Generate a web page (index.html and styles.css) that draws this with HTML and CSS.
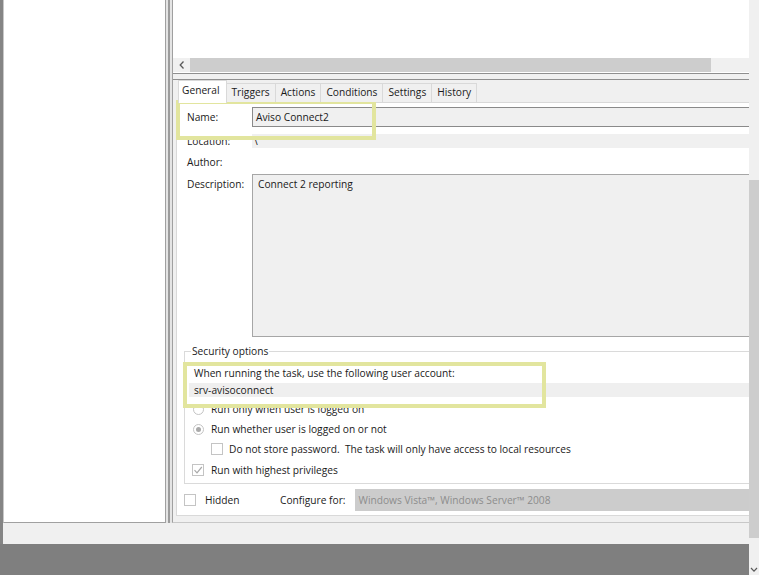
FILE: index.html
```html
<!DOCTYPE html>
<html lang="en">
<head>
    <meta charset="UTF-8">
    <meta name="viewport" content="width=device-width, initial-scale=1.0">
    <title>Task Properties - Aviso Connect2</title>
    <link rel="stylesheet" href="styles.css">
</head>
<body>
<div class="screen">
    <div class="main">
        <div class="frame">
            <div class="workspace">
                <div class="left-pane"></div>
                <div class="splitter"></div>
                <div class="right-pane">
                    <div class="task-list"></div>
                    <div class="hscroll">
                        <div class="scroll-btn">
                            <svg width="6" height="8" viewBox="0 0 6 8"><path d="M4.5 0.5 L1.2 4 L4.5 7.5" fill="none" stroke="#5a5a5a" stroke-width="1.3"/></svg>
                        </div>
                        <div class="hthumb"></div>
                        <div class="htrack"></div>
                    </div>
                    <div class="divider"></div>
                    <div class="tabs">
                        <div class="tab-strip">
                            <div class="tab active">General</div>
                            <div class="tab">Triggers</div>
                            <div class="tab">Actions</div>
                            <div class="tab">Conditions</div>
                            <div class="tab">Settings</div>
                            <div class="tab">History</div>
                        </div>
                        <div class="tab-page">
                            <div class="row row-name">
                                <span class="label">Name:</span>
                                <div class="field edit">Aviso Connect2</div>
                            </div>
                            <div class="row row-small">
                                <span class="label">Location:</span>
                                <div class="field flat">\</div>
                            </div>
                            <div class="row row-small">
                                <span class="label">Author:</span>
                            </div>
                            <div class="row row-desc">
                                <span class="label">Description:</span>
                                <div class="field memo">Connect 2 reporting</div>
                            </div>

                            <fieldset class="security">
                                <legend>Security options</legend>
                                <div class="account-label">When running the task, use the following user account:</div>
                                <div class="account-name">srv-avisoconnect</div>
                                <div class="option radio-row first">
                                    <span class="radio"></span>Run only when user is logged on
                                </div>
                                <div class="option radio-row">
                                    <span class="radio checked"></span>Run whether user is logged on or not
                                </div>
                                <div class="option sub-row">
                                    <span class="check"></span>Do not store password.&nbsp; The task will only have access to local resources
                                </div>
                                <div class="option priv-row">
                                    <span class="check">
                                        <svg width="10" height="10" viewBox="0 0 10 10"><path d="M1.5 5.2 L4 7.8 L8.8 2" fill="none" stroke="#a8a8a8" stroke-width="1.2"/></svg>
                                    </span>Run with highest privileges
                                </div>
                            </fieldset>

                            <div class="bottom-row">
                                <div class="hidden-opt"><span class="check"></span>Hidden</div>
                                <span class="configure-label">Configure for:</span>
                                <div class="combo">Windows Vista&trade;, Windows Server&trade; 2008</div>
                            </div>
                        </div>
                    </div>
                </div>
            </div>
            <div class="statusbar"></div>
        </div>
        <div class="desktop"></div>
    </div>
    <div class="vscroll">
        <div class="vtrack top"></div>
        <div class="vthumb"></div>
        <div class="vtrack bottom">
            <svg width="8" height="6" viewBox="0 0 8 6"><path d="M1 1 L4 4.2 L7 1" fill="none" stroke="#5a5a5a" stroke-width="1.2"/></svg>
        </div>
    </div>
    <!-- yellow marks drawn over the dialog -->
    <div class="highlight hl-name"></div>
    <div class="highlight hl-account"></div>
</div>
</body>
</html>
```

FILE: styles.css
```css
* {
    box-sizing: border-box;
}
body {
    margin: 0;
    font-family: "Open Sans", "Segoe UI", sans-serif;
    font-size: 10.2px;
    color: #1a1a1a;
    background-color: #7f7f7f;
}
.screen {
    position: relative;
    width: 759px;
    height: 575px;
    display: flex;
    overflow: hidden;
}
.main {
    width: 749px;
    display: flex;
    flex-direction: column;
}
.frame {
    height: 544px;
    display: flex;
    flex-direction: column;
    border-left: 3px solid #858585;
    background-color: #f0f0f0;
}
.workspace {
    height: 523px;
    display: flex;
}
.left-pane {
    width: 163px;
    background-color: #fff;
    border-left: 1px solid #c8c8c8;
    border-right: 1px solid #a0a0a0;
    border-bottom: 1px solid #a0a0a0;
}
.splitter {
    width: 6px;
    background: linear-gradient(to right, #e4e4e4 0 2px, #9c9c9c 2px 4px, #e4e4e4 4px);
}
.right-pane {
    width: 577px;
    display: flex;
    flex-direction: column;
    overflow: hidden;
    border-left: 1px solid #a0a0a0;
    border-bottom: 1px solid #c8c8c8;
}
.task-list {
    height: 57px;
    background-color: #fff;
}
.hscroll {
    height: 16px;
    display: flex;
    padding: 1px 0;
    background-color: #fff;
}
.scroll-btn {
    width: 17px;
    display: flex;
    align-items: center;
    justify-content: center;
    background-color: #f0f0f0;
}
.hthumb {
    width: 521px;
    background-color: #cdcdcd;
}
.htrack {
    flex: 1;
    background-color: #f0f0f0;
}
.divider {
    height: 7px;
    border-top: 1px solid #8f8f8f;
    border-bottom: 1px solid #8f8f8f;
    background-color: #f0f0f0;
}
.tabs {
    flex: 1;
    padding-left: 3px;
    background-color: #f0f0f0;
}
.tab-strip {
    position: relative;
    z-index: 1;
    height: 22px;
    display: flex;
    align-items: flex-end;
    padding-left: 3px;
}
.tab {
    height: 19px;
    line-height: 17px;
    padding: 0 5px;
    margin-left: -1px;
    border: 1px solid #d9d9d9;
    border-bottom: none;
    background-color: #f0f0f0;
    white-space: nowrap;
}
.tab.active {
    height: 23px;
    line-height: 19px;
    margin-bottom: -1px;
    padding: 0 6px 0 3px;
    background-color: #fff;
}
.tab-page {
    width: 640px;
    height: 414px;
    padding: 4px 0 0 10px;
    background-color: #fff;
    border: 1px solid #d9d9d9;
}
.row {
    display: flex;
    align-items: flex-start;
}
.label {
    width: 65px;
    flex-shrink: 0;
    line-height: 14px;
}
.field {
    flex: 1;
    line-height: 14px;
    background-color: #f0f0f0;
    white-space: nowrap;
}
.row-name .label {
    line-height: 20px;
}
.edit {
    height: 20px;
    line-height: 18px;
    padding-left: 3px;
    border: 1px solid #8a8a8a;
}
.row-small {
    height: 14px;
    margin-top: 7px;
}
.flat {
    height: 14px;
    padding-left: 2px;
}
.row-desc {
    margin-top: 5px;
}
.row-desc .label {
    padding-top: 3px;
}
.memo {
    height: 163px;
    padding: 2px 5px;
    border: 1px solid #a6a6a6;
}
.security {
    margin: 7px 0 0 -3px;
    padding: 0 0 6px 2px;
    border: 1px solid #dadada;
    border-right: none;
    min-width: 0;
}
.security legend {
    margin-left: 4px;
    padding: 0 1px;
    line-height: 14px;
}
.account-label {
    margin-top: 8px;
    padding-left: 7px;
    line-height: 14px;
}
.account-name {
    margin: 3px 0 0 2px;
    padding-left: 5px;
    line-height: 14px;
    background-color: #efefef;
}
.option {
    height: 14px;
    display: flex;
    align-items: center;
    white-space: nowrap;
}
.radio-row {
    margin-top: 6px;
    padding-left: 6px;
    gap: 7px;
}
.radio-row.first {
    margin-top: 5px;
}
.sub-row {
    margin-top: 6px;
    padding-left: 24px;
    gap: 6px;
}
.priv-row {
    margin-top: 7px;
    padding-left: 5px;
    gap: 7px;
}
.radio {
    width: 11px;
    height: 11px;
    flex-shrink: 0;
    border: 1px solid #c4c4c4;
    border-radius: 50%;
    background-color: #fff;
    display: flex;
    align-items: center;
    justify-content: center;
}
.radio.checked::after {
    content: "";
    width: 5px;
    height: 5px;
    border-radius: 50%;
    background-color: #a9a9a9;
}
.check {
    width: 12px;
    height: 12px;
    flex-shrink: 0;
    border: 1px solid #c4c4c4;
    background-color: #fff;
    display: flex;
    align-items: center;
    justify-content: center;
}
.bottom-row {
    height: 22px;
    margin: 5px 0 0 -3px;
    display: flex;
    align-items: center;
}
.hidden-opt {
    width: 96px;
    display: flex;
    align-items: center;
    gap: 9px;
}
.configure-label {
    margin-right: 9px;
}
.combo {
    flex: 1;
    height: 22px;
    line-height: 22px;
    padding-left: 4px;
    color: #8c8c8c;
    background-color: #cccccc;
    white-space: nowrap;
}
.statusbar {
    flex: 1;
    background-color: #f0f0f0;
}
.desktop {
    flex: 1;
    background-color: #7f7f7f;
}
.vscroll {
    width: 10px;
    display: flex;
    flex-direction: column;
    background-color: #f0f0f0;
}
.vtrack.top {
    height: 180px;
}
.vthumb {
    height: 358px;
    background-color: #cdcdcd;
}
.vtrack.bottom {
    flex: 1;
    display: flex;
    align-items: flex-end;
    justify-content: center;
    padding-bottom: 2px;
}
.highlight {
    position: absolute;
    border: 4px solid #e2e59e;
}
.hl-name {
    left: 176px;
    top: 100px;
    width: 200px;
    height: 40px;
}
.hl-account {
    left: 183px;
    top: 362px;
    width: 363px;
    height: 46px;
}
```
